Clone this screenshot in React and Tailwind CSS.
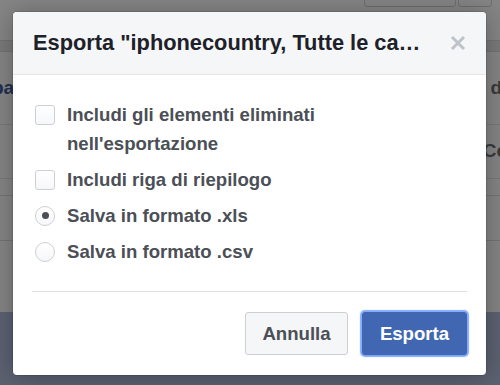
import React, { useState } from 'react';

export default function ExportDialog() {
  const [includeDeleted, setIncludeDeleted] = useState(false);
  const [includeSummary, setIncludeSummary] = useState(false);
  const [format, setFormat] = useState('xls');

  return (
    <div className="relative w-[500px] h-[385px] overflow-hidden bg-[#858585] font-['Liberation_Sans',Arial,sans-serif]">

      {/* --- Dimmed page behind --- */}
      <div className="flex flex-col h-full">
        <div className="h-[40px] flex justify-end items-start gap-[2px] pr-[8px]">
          <div className="w-[92px] h-[8px] -mt-[1px] border border-[#6e6e6e] rounded-b-[3px]"></div>
          <div className="w-[34px] h-[8px] -mt-[1px] border border-[#6e6e6e] rounded-b-[3px]"></div>
        </div>
        <div className="h-[12px] bg-[#7a7a7a] border-y border-[#737373]"></div>
        <div className="h-[72px] flex items-center justify-between">
          <span className="text-[19px] font-bold text-[#1f2f52] -ml-[8px]">pa</span>
          <span className="text-[19px] font-bold text-[#3a3a3a] -mr-[2px]">d</span>
        </div>
        <div className="h-[54px] border-t border-[#787878] flex items-center justify-end">
          <span className="text-[19px] font-bold text-[#3a3a3a] -mr-[8px]">Co</span>
        </div>
        <div className="h-[17px] border-t border-[#787878]"></div>
        <div className="h-[45px] border-t border-[#747474]"></div>
        <div className="h-[72px] border-t border-[#747474]"></div>
        <div className="flex-1 bg-[#5d6272]"></div>
      </div>

      {/* --- Modal --- */}
      <div className="absolute left-[13px] top-[12px] w-[473px] h-[363px] bg-white rounded-[4px] shadow-[0_2px_26px_rgba(0,0,0,0.3),0_0_0_1px_rgba(0,0,0,0.1)] flex flex-col overflow-hidden">
        <div className="h-[63px] shrink-0 bg-[#f5f6f7] border-b border-[#e5e5e5] flex items-center pl-[20px] pr-[19px]">
          <h2 className="flex-1 min-w-0 truncate text-[21.8px] font-bold text-[#1d2129] leading-none">
            Esporta "iphonecountry, Tutte le ca…
          </h2>
          <button className="ml-[10px] w-[18px] h-[18px] flex items-center justify-center text-[#bec2c9]">
            <svg width="16" height="16" viewBox="0 0 16 16">
              <path d="M2 2L14 14M14 2L2 14" stroke="currentColor" strokeWidth="3" strokeLinecap="butt" />
            </svg>
          </button>
        </div>

        <div className="flex flex-col gap-[7px] pt-[25px] pl-[22px] pr-[20px] text-[18.6px] font-bold text-[#4b4f56] leading-[29px]">
          <label className="flex items-start gap-[12px] cursor-pointer" onClick={() => setIncludeDeleted(!includeDeleted)}>
            <span className="mt-[4.5px] w-[20px] h-[20px] shrink-0 rounded-[3px] border border-[#ccd0d5] bg-gradient-to-b from-white to-[#f6f7f9]"></span>
            <span>Includi gli elementi eliminati nell'esportazione</span>
          </label>
          <label className="flex items-start gap-[12px] cursor-pointer" onClick={() => setIncludeSummary(!includeSummary)}>
            <span className="mt-[4.5px] w-[20px] h-[20px] shrink-0 rounded-[3px] border border-[#ccd0d5] bg-gradient-to-b from-white to-[#f6f7f9]"></span>
            <span>Includi riga di riepilogo</span>
          </label>
          <label className="flex items-start gap-[12px] cursor-pointer" onClick={() => setFormat('xls')}>
            <span className="mt-[4.5px] w-[20px] h-[20px] shrink-0 rounded-full border border-[#ccd0d5] bg-gradient-to-b from-white to-[#f6f7f9] flex items-center justify-center">
              {format === 'xls' && <span className="w-[7px] h-[7px] rounded-full bg-[#4b4f56]"></span>}
            </span>
            <span>Salva in formato .xls</span>
          </label>
          <label className="flex items-start gap-[12px] cursor-pointer" onClick={() => setFormat('csv')}>
            <span className="mt-[4.5px] w-[20px] h-[20px] shrink-0 rounded-full border border-[#ccd0d5] bg-gradient-to-b from-white to-[#f6f7f9] flex items-center justify-center">
              {format === 'csv' && <span className="w-[7px] h-[7px] rounded-full bg-[#4b4f56]"></span>}
            </span>
            <span>Salva in formato .csv</span>
          </label>
        </div>

        <div className="mx-[19px] mt-[25px] border-t border-[#dddfe2]"></div>

        <div className="flex justify-end items-center gap-[14px] pt-[20px] pr-[19px]">
          <button className="w-[103px] h-[43px] rounded-[3px] border border-[#ccd0d5] bg-[#f5f6f7] text-[18.6px] font-bold text-[#4b4f56]">
            Annulla
          </button>
          <button className="w-[105px] h-[43px] rounded-[3px] border border-[#4267b2] bg-[#4267b2] text-[18.6px] font-bold text-white shadow-[0_0_1px_2px_rgba(88,144,255,0.75),0_1px_1px_rgba(0,0,0,0.15)]">
            Esporta
          </button>
        </div>
      </div>
    </div>
  );
}
